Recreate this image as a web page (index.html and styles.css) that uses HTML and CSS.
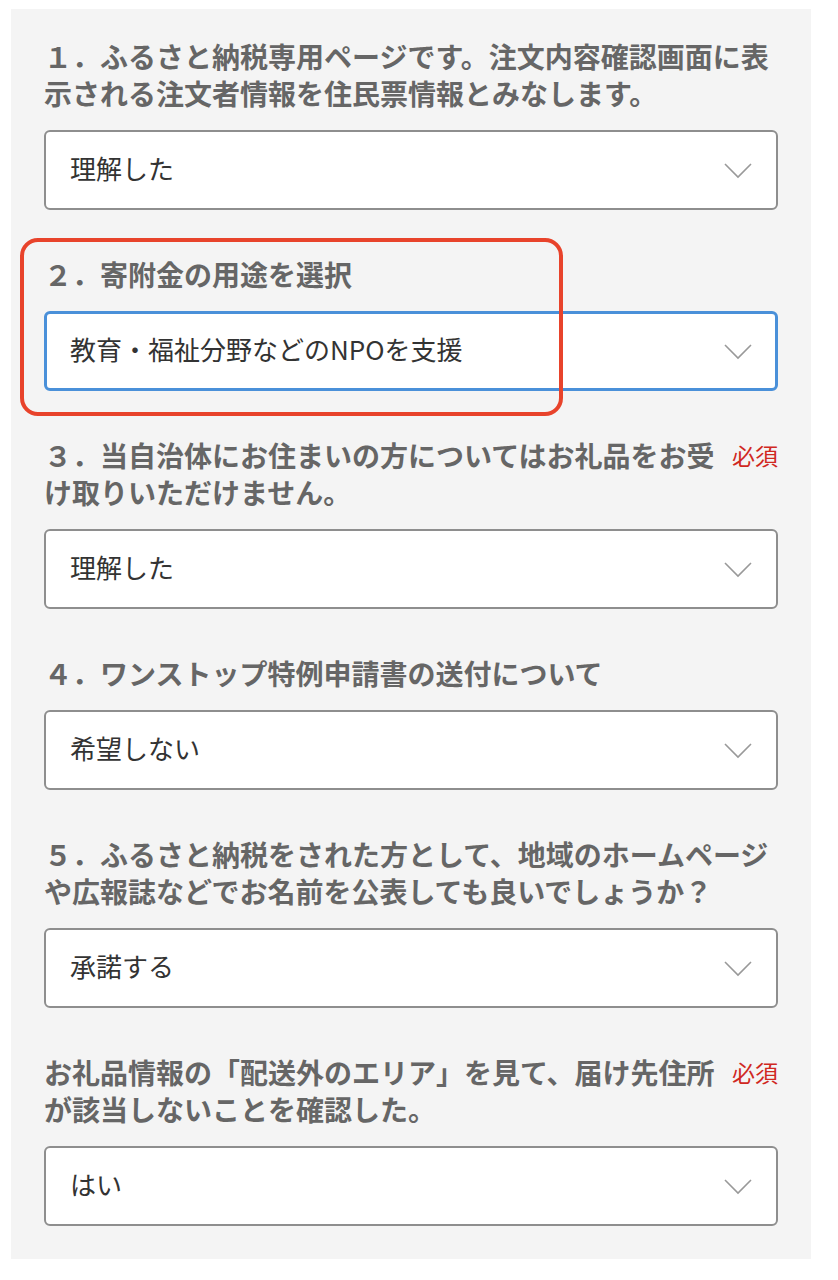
FILE: index.html
```html
<!DOCTYPE html>
<html lang="ja">
<head>
<meta charset="utf-8">
<link rel="stylesheet" href="styles.css">
</head>
<body>
<div class="panel">
  <div class="item">
    <div class="label-row"><div class="label">１．ふるさと納税専用ページです。注文内容確認画面に表示される注文者情報を住民票情報とみなします。</div></div>
    <div class="select"><span class="value">理解した</span><svg class="chev" width="28" height="16" viewBox="0 0 28 16"><polyline points="1,1 14,14 27,1" fill="none" stroke="#999" stroke-width="1.6"/></svg></div>
  </div>
  <div class="item highlighted">
    <div class="label-row"><div class="label">２．寄附金の用途を選択</div></div>
    <div class="select focused"><span class="value">教育・福祉分野などのNPOを支援</span><svg class="chev" width="28" height="16" viewBox="0 0 28 16"><polyline points="1,1 14,14 27,1" fill="none" stroke="#999" stroke-width="1.6"/></svg></div>
    <div class="mark"></div>
  </div>
  <div class="item">
    <div class="label-row"><div class="label">３．当自治体にお住まいの方についてはお礼品をお受け取りいただけません。</div><span class="req">必須</span></div>
    <div class="select"><span class="value">理解した</span><svg class="chev" width="28" height="16" viewBox="0 0 28 16"><polyline points="1,1 14,14 27,1" fill="none" stroke="#999" stroke-width="1.6"/></svg></div>
  </div>
  <div class="item">
    <div class="label-row"><div class="label">４．ワンストップ特例申請書の送付について</div></div>
    <div class="select"><span class="value">希望しない</span><svg class="chev" width="28" height="16" viewBox="0 0 28 16"><polyline points="1,1 14,14 27,1" fill="none" stroke="#999" stroke-width="1.6"/></svg></div>
  </div>
  <div class="item">
    <div class="label-row"><div class="label">５．ふるさと納税をされた方として、地域のホームページや広報誌などでお名前を公表しても良いでしょうか？</div></div>
    <div class="select"><span class="value">承諾する</span><svg class="chev" width="28" height="16" viewBox="0 0 28 16"><polyline points="1,1 14,14 27,1" fill="none" stroke="#999" stroke-width="1.6"/></svg></div>
  </div>
  <div class="item">
    <div class="label-row"><div class="label">お礼品情報の「配送外のエリア」を見て、届け先住所が該当しないことを確認した。</div><span class="req">必須</span></div>
    <div class="select"><span class="value">はい</span><svg class="chev" width="28" height="16" viewBox="0 0 28 16"><polyline points="1,1 14,14 27,1" fill="none" stroke="#999" stroke-width="1.6"/></svg></div>
  </div>
</div>
</body>
</html>
```
FILE: styles.css
```css
html, body {
  margin: 0;
  padding: 0;
  background: #ffffff;
}
body {
  padding: 9px 0 0 11px;
  font-family: "Noto Sans CJK JP", "Noto Sans", sans-serif;
}
.panel {
  width: 800px;
  box-sizing: border-box;
  background: #f4f4f4;
  padding: 29px 33px 33px;
  display: flex;
  flex-direction: column;
  gap: 46px;
}
.item {
  display: flex;
  flex-direction: column;
  gap: 18px;
}
.highlighted {
  position: relative;
}
.mark {
  position: absolute;
  left: -24px;
  top: -18px;
  width: 543px;
  height: 178px;
  box-sizing: border-box;
  border: 4px solid #e8432b;
  border-radius: 18px;
  pointer-events: none;
}
.label-row {
  display: flex;
  align-items: flex-start;
}
.label {
  flex: 1;
  font-size: 28px;
  line-height: 37px;
  font-weight: 700;
  color: #666666;
}
.req {
  flex: none;
  margin-left: 10px;
  font-size: 23px;
  line-height: 37px;
  color: #d0281f;
}
.select {
  height: 80px;
  box-sizing: border-box;
  border: 2px solid #8e8e8e;
  border-radius: 6px;
  background: #ffffff;
  display: flex;
  align-items: center;
  justify-content: space-between;
  padding: 0 24px 0 24px;
}
.select.focused {
  border: 3px solid #4a90d9;
  padding: 0 23px 0 23px;
}
.value {
  font-size: 26px;
  color: #333333;
  line-height: 1;
  margin-bottom: 5px;
}
.chev {
  display: block;
  margin-top: 2px;
}
```
